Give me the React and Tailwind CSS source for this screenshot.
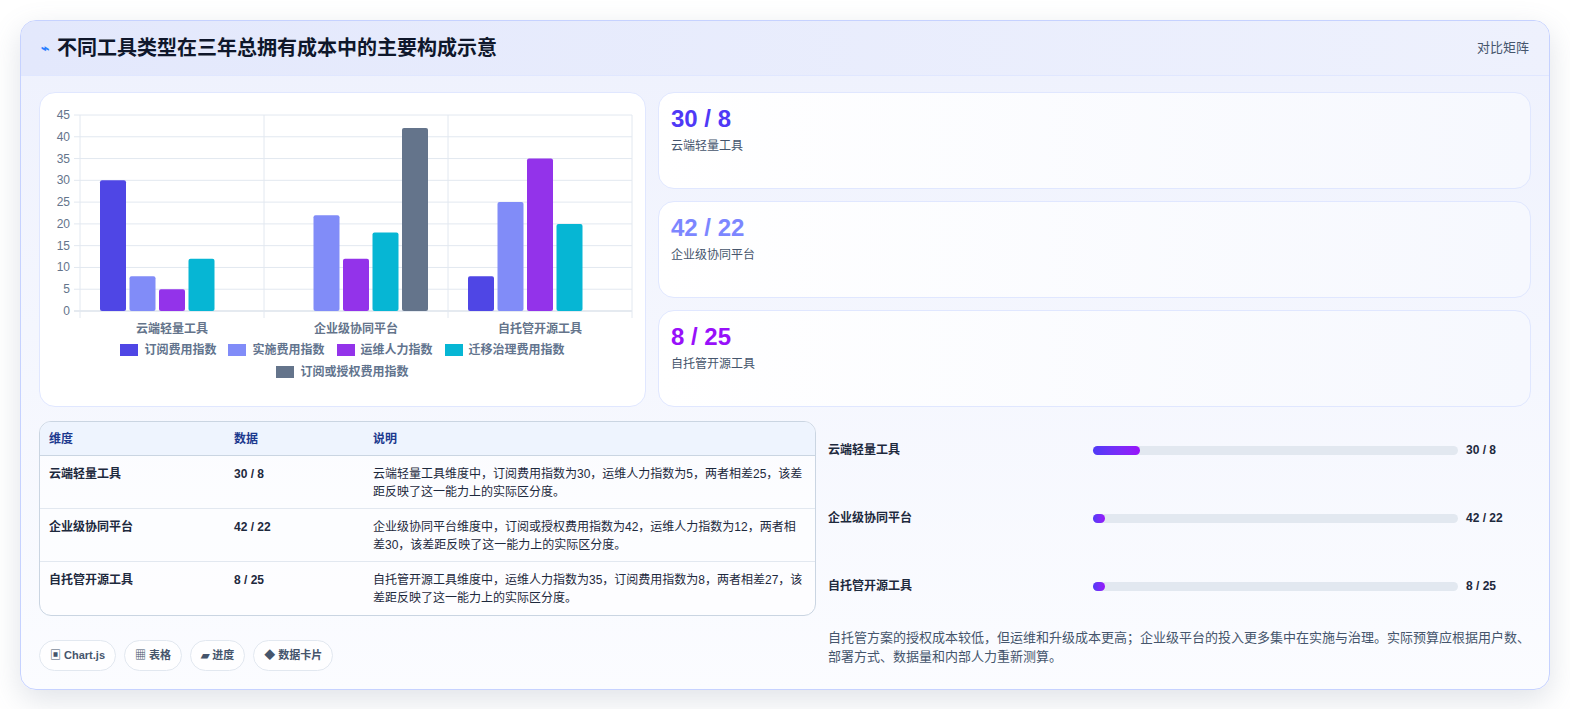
import React from 'react';

const series = [
  { name: '订阅费用指数', color: '#4f46e5', data: [30, 0, 8] },
  { name: '实施费用指数', color: '#818cf8', data: [8, 22, 25] },
  { name: '运维人力指数', color: '#9333ea', data: [5, 12, 35] },
  { name: '迁移治理费用指数', color: '#06b6d4', data: [12, 18, 20] },
  { name: '订阅或授权费用指数', color: '#64748b', data: [0, 42, 0] },
];
const groups = ['云端轻量工具', '企业级协同平台', '自托管开源工具'];

const rows = [
  { name: '云端轻量工具', val: '30 / 8', desc: '云端轻量工具维度中，订阅费用指数为30，运维人力指数为5，两者相差25，该差距反映了这一能力上的实际区分度。', pct: 10, color: 'text-indigo-600' },
  { name: '企业级协同平台', val: '42 / 22', desc: '企业级协同平台维度中，订阅或授权费用指数为42，运维人力指数为12，两者相差30，该差距反映了这一能力上的实际区分度。', pct: 2.5, color: 'text-indigo-400' },
  { name: '自托管开源工具', val: '8 / 25', desc: '自托管开源工具维度中，运维人力指数为35，订阅费用指数为8，两者相差27，该差距反映了这一能力上的实际区分度。', pct: 2.5, color: 'text-purple-600' },
];

function Chart() {
  const x0 = 40, y0 = 22, h = 196, gw = 184;
  const sy = (v) => y0 + h - (v / 45) * h;
  return (
    <svg width="605" height="250" className="block">
      {[0, 5, 10, 15, 20, 25, 30, 35, 40, 45].map((t) => (
        <g key={t}>
          <line x1={x0 - 6} x2={x0 + gw * 3} y1={sy(t)} y2={sy(t)} stroke={t === 0 ? '#cbd5e1' : '#e2e8f0'} />
          <text x={x0 - 10} y={sy(t) + 4} textAnchor="end" fontSize="12" fill="#64748b" fontFamily="Liberation Sans">{t}</text>
        </g>
      ))}
      {[0, 1, 2, 3].map((i) => (
        <line key={i} x1={x0 + gw * i} x2={x0 + gw * i} y1={y0} y2={y0 + h + 7} stroke="#e2e8f0" />
      ))}
      {groups.map((g, gi) => (
        <g key={g}>
          {series.map((s, si) => s.data[gi] > 0 && (
            <rect key={si} x={x0 + gw * gi + 20 + si * 29.5} y={sy(s.data[gi])} width="26" height={sy(0) - sy(s.data[gi])} rx="2" fill={s.color} />
          ))}
          <text x={x0 + gw * gi + gw / 2} y={y0 + h + 22} textAnchor="middle" fontSize="12" fontWeight="bold" fill="#64748b" fontFamily="Liberation Sans, Noto Sans CJK SC">{g}</text>
        </g>
      ))}
    </svg>
  );
}

export default function App() {
  return (
    <div className="min-h-[709px] bg-white pt-5 px-5" style={{ fontFamily: '"Liberation Sans", "Noto Sans CJK SC", sans-serif' }}>
      <div className="rounded-2xl border border-indigo-200 bg-gradient-to-b from-[#eef1fd] to-[#fbfcff] shadow-[0_10px_30px_rgba(100,116,139,0.2)] overflow-hidden">
        <div className="h-[55px] flex items-center justify-between px-5 bg-gradient-to-r from-[#e3e8fc] to-[#eef1fd] border-b border-indigo-100">
          <div className="flex items-center gap-2">
            <span className="text-blue-500 text-sm font-bold">⌁</span>
            <span className="text-[20px] font-bold text-slate-900">不同工具类型在三年总拥有成本中的主要构成示意</span>
          </div>
          <span className="text-[13px] text-slate-600">对比矩阵</span>
        </div>
        <div className="px-[18px] pt-[16px] pb-[18px]">
          <div className="flex gap-3">
            <div className="w-[607px] h-[315px] rounded-2xl bg-white border border-indigo-100 flex flex-col items-center">
              <Chart />
              <div className="flex flex-wrap justify-center gap-x-3 gap-y-1 w-[470px] -mt-[2px] text-[12px] font-bold text-slate-500">
                {series.map((s) => (
                  <span key={s.name} className="flex items-center gap-1.5">
                    <span className="w-[18px] h-[12px] inline-block" style={{ background: s.color }} />
                    {s.name}
                  </span>
                ))}
              </div>
            </div>
            <div className="flex-1 flex flex-col gap-3">
              {rows.map((r) => (
                <div key={r.name} className="h-[97px] rounded-2xl bg-gradient-to-r from-white to-[#f6f8fe] border border-indigo-100 px-3 pt-2">
                  <div className={`text-[24px] font-bold ${r.color}`}>{r.val}</div>
                  <div className="text-[12px] text-slate-600">{r.name}</div>
                </div>
              ))}
            </div>
          </div>
          <div className="flex gap-3 mt-[14px]">
            <div className="w-[777px]">
              <div className="rounded-xl border border-slate-300 overflow-hidden bg-white/60 text-[12px]">
                <div className="flex h-[34px] items-center bg-[#eef4fe] border-b border-slate-300 font-bold text-blue-900">
                  <div className="w-[194px] pl-[9px]">维度</div>
                  <div className="w-[139px]">数据</div>
                  <div className="flex-1">说明</div>
                </div>
                {rows.map((r, i) => (
                  <div key={r.name} className={`flex pt-[9px] h-[53px] text-slate-800 ${i < 2 ? 'border-b border-slate-200' : ''}`}>
                    <div className="w-[194px] pl-[9px] font-bold">{r.name}</div>
                    <div className="w-[139px] font-bold">{r.val}</div>
                    <div className="flex-1 pr-2 leading-[18px]">{r.desc}</div>
                  </div>
                ))}
              </div>
              <div className="flex gap-2 mt-6 text-[11px] font-bold text-slate-600">
                {['▣ Chart.js', '▦ 表格', '▰ 进度', '◆ 数据卡片'].map((c) => (
                  <span key={c} className="rounded-full border border-slate-200 bg-white/70 px-2.5 py-[6px]">{c}</span>
                ))}
              </div>
            </div>
            <div className="flex-1 -mt-[5px]">
              {rows.map((r) => (
                <div key={r.name} className="flex items-center h-[68px] text-[12px] font-bold text-slate-800">
                  <div className="w-[265px]">{r.name}</div>
                  <div className="w-[365px] h-[9px] rounded-full bg-slate-200">
                    <div className="h-full rounded-full bg-gradient-to-r from-indigo-600 to-purple-600" style={{ width: `${r.pct * 1.3}%`, minWidth: 11 }} />
                  </div>
                  <div className="ml-2">{r.val}</div>
                </div>
              ))}
              <p className="mt-[8px] text-[13px] leading-[19px] text-slate-600">自托管方案的授权成本较低，但运维和升级成本更高；企业级平台的投入更多集中在实施与治理。实际预算应根据用户数、部署方式、数据量和内部人力重新测算。</p>
            </div>
          </div>
        </div>
      </div>
    </div>
  );
}
